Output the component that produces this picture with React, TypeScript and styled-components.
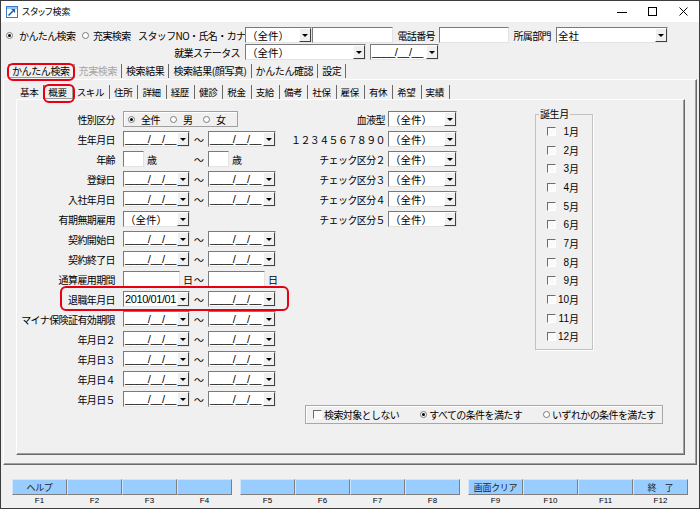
import React from 'react';
import styled, { createGlobalStyle, css } from 'styled-components';

const GlobalStyle = createGlobalStyle`
  html, body {
    margin: 0;
    padding: 0;
    background: #f0f0f0;
  }
  *, *::before, *::after {
    box-sizing: border-box;
  }
`;

const jp = `"Noto Sans CJK JP", "Noto Sans", sans-serif`;
const latin = `"Liberation Sans", Arial, sans-serif`;

const Window = styled.div`
  width: 700px;
  height: 509px;
  border: 1px solid #3c3c3c;
  background: #f0f0f0;
  display: flex;
  flex-direction: column;
  font-family: ${jp};
  font-size: 10px;
  letter-spacing: -0.6px;
  color: #000;
  overflow: hidden;
`;

const TitleBar = styled.div`
  flex: none;
  height: 21px;
  background: #fff;
  display: flex;
  align-items: center;
  padding-left: 5px;
`;

const TitleText = styled.span`
  margin-left: 4px;
  font-size: 9px;
  letter-spacing: 0;
  font-feature-settings: "palt";
`;

const WinControls = styled.div`
  margin-left: auto;
  display: flex;
  height: 100%;
`;

const WinButton = styled.div`
  width: 31px;
  display: flex;
  align-items: center;
  justify-content: center;
`;

const Header = styled.div`
  flex: none;
  padding: 5px 0 0 5px;
  display: flex;
  flex-direction: column;
  gap: 1px;
`;

const HeaderRow = styled.div`
  height: 16px;
  display: flex;
  align-items: center;
`;

const FieldLabel = styled.span<{ $w: number; $pr?: number }>`
  flex: none;
  width: ${p => p.$w}px;
  padding-right: ${p => p.$pr ?? 0}px;
  text-align: right;
  white-space: nowrap;
`;

const sunken = css`
  border: 1px solid;
  border-color: #7a7a7a #e3e3e3 #e3e3e3 #7a7a7a;
  background: #fff;
`;

const TextBox = styled.div<{ $w: number; $ml?: number }>`
  ${sunken}
  flex: none;
  width: ${p => p.$w}px;
  height: 16px;
  margin-left: ${p => p.$ml ?? 0}px;
`;

const ComboFrame = styled.div<{ $w: number; $ml?: number }>`
  ${sunken}
  flex: none;
  width: ${p => p.$w}px;
  height: 16px;
  margin-left: ${p => p.$ml ?? 0}px;
  display: flex;
  align-items: center;
  overflow: hidden;
`;

const ComboText = styled.span<{ $date?: boolean }>`
  flex: 1;
  white-space: nowrap;
  overflow: hidden;
  ${p => p.$date
    ? css`
        font-family: ${latin};
        font-size: 11px;
        letter-spacing: -0.4px;
        padding-left: 1px;
      `
    : css`
        font-size: 10.5px;
        letter-spacing: 0;
        padding-left: 1px;
      `}
`;

const DropBtn = styled.span`
  flex: none;
  width: 12px;
  height: 14px;
  background: #f0f0f0;
  border: 1px solid;
  border-color: #fff #404040 #404040 #fff;
  display: flex;
  align-items: center;
  justify-content: center;

  &::after {
    content: '';
    border-left: 3px solid transparent;
    border-right: 3px solid transparent;
    border-top: 3px solid #000;
  }
`;

const RadioCircle = styled.span<{ $on?: boolean }>`
  flex: none;
  width: 7px;
  height: 7px;
  border-radius: 50%;
  border: 1px solid #7a7a7a;
  background: #fff;
  display: flex;
  align-items: center;
  justify-content: center;

  &::after {
    content: '';
    width: 3px;
    height: 3px;
    border-radius: 50%;
    background: ${p => (p.$on ? '#000' : 'transparent')};
  }
`;

const Option = styled.span<{ $w?: number; $gap: number }>`
  flex: none;
  display: inline-flex;
  align-items: center;
  gap: ${p => p.$gap}px;
  width: ${p => (p.$w ? `${p.$w}px` : 'auto')};
  white-space: nowrap;
`;

const CheckBox = styled.span`
  flex: none;
  width: 9px;
  height: 9px;
  border: 1px solid;
  border-color: #6d6d6d #fff #fff #6d6d6d;
  background: #fafafa;
`;

const marker = css`
  &::after {
    content: '';
    position: absolute;
    border: 2.5px solid #e60012;
    border-radius: 6px;
    pointer-events: none;
  }
`;

const TabStrip = styled.div<{ $ml: number; $h: number; $mt?: number }>`
  flex: none;
  height: ${p => p.$h}px;
  margin: ${p => p.$mt ?? 0}px 0 0 ${p => p.$ml}px;
  display: flex;
  align-items: center;
`;

const Tab = styled.span<{ $active?: boolean; $disabled?: boolean; $marked?: boolean; $small?: boolean }>`
  position: relative;
  flex: none;
  height: 14px;
  line-height: 14px;
  padding: ${p => (p.$small ? '0 5px 0 4px' : '0 4px')};
  border-right: 1px solid #6a6a6a;
  font-size: ${p => (p.$small ? '9.5px' : '10px')};
  letter-spacing: ${p => (p.$small ? '-0.35px' : '-0.4px')};
  color: ${p => (p.$disabled ? '#a3a3a3' : '#000')};
  white-space: nowrap;
  ${p => p.$active && css`
    outline: 1px solid #9a9a9a;
    outline-offset: -1px;
  `}
  ${p => p.$marked && marker}
  ${p => p.$marked && !p.$small && css`
    &::after { left: -1px; right: -1px; top: -1px; bottom: -3px; }
  `}
  ${p => p.$marked && p.$small && css`
    &::after { left: -1px; right: -3px; top: -1px; bottom: -4px; }
  `}
`;

const OuterPanel = styled.div`
  flex: 1;
  min-height: 0;
  margin: 0 2px;
  border: 1px solid;
  border-color: #fff #696969 #696969 #fff;
  box-shadow: inset -1px -1px 0 #a0a0a0;
  display: flex;
  flex-direction: column;
  padding: 4px 11px 9px 12px;
`;

const InnerPanel = styled.div`
  flex: 1;
  min-height: 0;
  border: 1px solid;
  border-color: #fff #696969 #696969 #fff;
  box-shadow: inset -1px -1px 0 #a0a0a0;
  display: flex;
  padding-top: 9px;
`;

const LeftForm = styled.div`
  flex: none;
  width: 259px;
  display: flex;
  flex-direction: column;
`;

const FormRow = styled.div<{ $marked?: boolean }>`
  position: relative;
  height: 20px;
  display: grid;
  grid-template-columns: 106px 67px 18px 68px;
  align-items: center;
  ${p => p.$marked && marker}
  ${p => p.$marked && css`
    &::after { left: 43px; right: -13px; top: -3px; bottom: -2px; }
  `}
`;

const RowLabel = styled.span<{ $pr?: number }>`
  padding-right: ${p => p.$pr ?? 8}px;
  text-align: right;
  white-space: nowrap;
`;

const Cell = styled.div`
  display: flex;
  align-items: center;
`;

const Suffix = styled.span`
  margin-left: 3px;
`;

const Tilde = styled.span`
  text-align: center;
  letter-spacing: 0;
`;

const SexGroup = styled.div`
  grid-column: 2 / -1;
  width: 115px;
  height: 16px;
  border: 1px solid #a0a0a0;
  box-shadow: inset 1px 1px 0 #fff;
  display: flex;
  align-items: center;
  padding-left: 4px;
`;

const RightArea = styled.div`
  flex: 1;
  display: flex;
  flex-direction: column;
  padding-bottom: 30px;
`;

const TopRow = styled.div`
  display: flex;
  align-items: flex-start;
`;

const MiddleForm = styled.div`
  flex: none;
  width: 181px;
  display: flex;
  flex-direction: column;
`;

const MidRow = styled.div`
  height: 20px;
  display: grid;
  grid-template-columns: 109px 69px;
  column-gap: 3px;
  align-items: center;
`;

const MonthBox = styled.fieldset`
  margin: 0 0 0 78px;
  padding: 3px 0 3px 11px;
  width: 58px;
  min-inline-size: 0;
  border: 1px solid #c2c2c2;
  box-shadow: 1px 1px 0 #fff;
`;

const MonthLegend = styled.legend`
  margin-left: -8px;
  padding: 0 1px;
  font-size: 10px;
  line-height: 10px;
  letter-spacing: -0.4px;
`;

const MonthRow = styled.div`
  height: 18.7px;
  display: flex;
  align-items: center;
`;

const MonthNum = styled.span`
  width: 12px;
  margin-left: 1px;
  text-align: right;
  font-family: ${latin};
  font-size: 10px;
  letter-spacing: 0;
`;

const CondBox = styled.div`
  margin: auto 0 0 29px;
  width: 358px;
  height: 19px;
  border: 1px solid #a8a8a8;
  box-shadow: inset 1px 1px 0 #fff;
  display: flex;
  align-items: center;
  padding-left: 7px;
  gap: 21px;
`;

const Footer = styled.div`
  flex: none;
  height: 43px;
  padding: 14px 0 0 11px;
  display: flex;
  gap: 8px;
`;

const FnGroup = styled.div`
  display: flex;
`;

const FnKey = styled.div`
  width: 55px;
  display: flex;
  flex-direction: column;
  align-items: center;
`;

const FnButton = styled.div`
  width: 100%;
  height: 16px;
  background: #99ccff;
  border: 1px solid;
  border-color: #cfe5fa #7f7f7f #7f7f7f #cfe5fa;
  display: flex;
  align-items: center;
  justify-content: center;
  font-size: 9px;
  letter-spacing: -0.3px;
  color: #222;
  white-space: pre;
`;

const FnLabel = styled.div`
  margin-top: 1px;
  font-family: ${latin};
  font-size: 8px;
  line-height: 10px;
  letter-spacing: 0;
`;

const DATE_MASK = '____/__/__';

function Combo({ w, value, date, ml }: { w: number; value: string; date?: boolean; ml?: number }) {
  return (
    <ComboFrame $w={w} $ml={ml}>
      <ComboText $date={date}>{value}</ComboText>
      <DropBtn />
    </ComboFrame>
  );
}

function Radio({ on, label, w, gap = 6 }: { on?: boolean; label: string; w?: number; gap?: number }) {
  return (
    <Option $w={w} $gap={gap}>
      <RadioCircle $on={on} />
      <span>{label}</span>
    </Option>
  );
}

function AppIcon() {
  return (
    <svg width="12" height="12" viewBox="0 0 12 12">
      <rect x="0.5" y="0.5" width="11" height="11" fill="#fff" stroke="#3a78c8" />
      <rect x="1" y="1" width="10" height="2" fill="#9cc3ee" />
      <path d="M2.5 9.5 L8 4" stroke="#1e5eb0" strokeWidth="1.6" />
      <path d="M5.5 3.5 H8.5 V6.5" stroke="#1e5eb0" strokeWidth="1.2" fill="none" />
    </svg>
  );
}

type LeftRow = {
  label: string;
  kind: 'sex' | 'date' | 'age' | 'select' | 'days';
  from?: string;
  marked?: boolean;
};

const leftRows: LeftRow[] = [
  { label: '性別区分', kind: 'sex' },
  { label: '生年月日', kind: 'date' },
  { label: '年齢', kind: 'age' },
  { label: '登録日', kind: 'date' },
  { label: '入社年月日', kind: 'date' },
  { label: '有期無期雇用', kind: 'select' },
  { label: '契約開始日', kind: 'date' },
  { label: '契約終了日', kind: 'date' },
  { label: '通算雇用期間', kind: 'days' },
  { label: '退職年月日', kind: 'date', from: '2010/01/01', marked: true },
  { label: 'マイナ保険証有効期限', kind: 'date' },
  { label: '年月日２', kind: 'date' },
  { label: '年月日３', kind: 'date' },
  { label: '年月日４', kind: 'date' },
  { label: '年月日５', kind: 'date' },
];

const midRows = ['血液型', '１２３４５６７８９０', 'チェック区分２', 'チェック区分３', 'チェック区分４', 'チェック区分５'];

const subTabs = ['基本', '概要', 'スキル', '住所', '詳細', '経歴', '健診', '税金', '支給', '備考', '社保', '雇保', '有休', '希望', '実績'];

const fnKeys = [
  ['ヘルプ', '', '', ''],
  ['', '', '', ''],
  ['画面クリア', '', '', '終　了'],
];

function renderRow(row: LeftRow) {
  switch (row.kind) {
    case 'sex':
      return (
        <SexGroup>
          <Radio on label="全件" w={42} />
          <Radio label="男" w={33} />
          <Radio label="女" />
        </SexGroup>
      );
    case 'age':
      return (
        <>
          <Cell><TextBox $w={21} /><Suffix>歳</Suffix></Cell>
          <Tilde>～</Tilde>
          <Cell><TextBox $w={21} /><Suffix>歳</Suffix></Cell>
        </>
      );
    case 'days':
      return (
        <>
          <Cell><TextBox $w={57} /><Suffix>日</Suffix></Cell>
          <Tilde>～</Tilde>
          <Cell><TextBox $w={57} /><Suffix>日</Suffix></Cell>
        </>
      );
    case 'select':
      return (
        <Cell><Combo w={67} value="（全件）" /></Cell>
      );
    default:
      return (
        <>
          <Cell><Combo w={67} value={row.from ?? DATE_MASK} date /></Cell>
          <Tilde>～</Tilde>
          <Cell><Combo w={68} value={DATE_MASK} date /></Cell>
        </>
      );
  }
}

export default function App() {
  return (
    <>
      <GlobalStyle />
      <Window>
        <TitleBar>
          <AppIcon />
          <TitleText>スタッフ検索</TitleText>
          <WinControls>
            <WinButton>
              <svg width="10" height="10" viewBox="0 0 10 10"><path d="M0 5.5 H10" stroke="#000" /></svg>
            </WinButton>
            <WinButton>
              <svg width="9" height="9" viewBox="0 0 9 9"><rect x="0.5" y="0.5" width="8" height="8" fill="none" stroke="#000" /></svg>
            </WinButton>
            <WinButton>
              <svg width="9" height="9" viewBox="0 0 9 9"><path d="M0.5 0.5 L8.5 8.5 M8.5 0.5 L0.5 8.5" stroke="#000" /></svg>
            </WinButton>
          </WinControls>
        </TitleBar>

        <Header>
          <HeaderRow>
            <Radio on label="かんたん検索" w={76} />
            <Radio label="充実検索" w={56} gap={4} />
            <FieldLabel $w={107} $pr={5}>スタッフNO・氏名・カナ</FieldLabel>
            <Combo w={67} value="（全件）" />
            <TextBox $w={81} />
            <FieldLabel $w={46} $pr={4}>電話番号</FieldLabel>
            <TextBox $w={70} />
            <FieldLabel $w={47} $pr={5}>所属部門</FieldLabel>
            <Combo w={112} value="全社" />
          </HeaderRow>
          <HeaderRow>
            <FieldLabel $w={239} $pr={5}>就業ステータス</FieldLabel>
            <Combo w={121} value="（全件）" />
            <Combo w={69} value={DATE_MASK} date ml={4} />
          </HeaderRow>
        </Header>

        <TabStrip $ml={7} $mt={3} $h={16}>
          <Tab $active $marked>かんたん検索</Tab>
          <Tab $disabled>充実検索</Tab>
          <Tab>検索結果</Tab>
          <Tab>検索結果(顔写真)</Tab>
          <Tab>かんたん確認</Tab>
          <Tab>設定</Tab>
        </TabStrip>

        <OuterPanel>
          <TabStrip $ml={0} $h={15}>
            {subTabs.map((t, i) => (
              <Tab key={t} $small $active={i === 1} $marked={i === 1}>{t}</Tab>
            ))}
          </TabStrip>

          <InnerPanel>
            <LeftForm>
              {leftRows.map(row => (
                <FormRow key={row.label} $marked={row.marked}>
                  <RowLabel>{row.label}</RowLabel>
                  {renderRow(row)}
                </FormRow>
              ))}
            </LeftForm>

            <RightArea>
              <TopRow>
                <MiddleForm>
                  {midRows.map(label => (
                    <MidRow key={label}>
                      <RowLabel $pr={0}>{label}</RowLabel>
                      <Combo w={69} value="（全件）" />
                    </MidRow>
                  ))}
                </MiddleForm>

                <MonthBox>
                  <MonthLegend>誕生月</MonthLegend>
                  {Array.from({ length: 12 }, (_, i) => i + 1).map(m => (
                    <MonthRow key={m}>
                      <CheckBox />
                      <MonthNum>{m}</MonthNum>
                      <span>月</span>
                    </MonthRow>
                  ))}
                </MonthBox>
              </TopRow>

              <CondBox>
                <Option $gap={2}>
                  <CheckBox />
                  <span>検索対象としない</span>
                </Option>
                <Radio on label="すべての条件を満たす" gap={2} />
                <Radio label="いずれかの条件を満たす" gap={2} />
              </CondBox>
            </RightArea>
          </InnerPanel>
        </OuterPanel>

        <Footer>
          {fnKeys.map((group, g) => (
            <FnGroup key={g}>
              {group.map((label, i) => (
                <FnKey key={i}>
                  <FnButton>{label}</FnButton>
                  <FnLabel>F{g * 4 + i + 1}</FnLabel>
                </FnKey>
              ))}
            </FnGroup>
          ))}
        </Footer>
      </Window>
    </>
  );
}
